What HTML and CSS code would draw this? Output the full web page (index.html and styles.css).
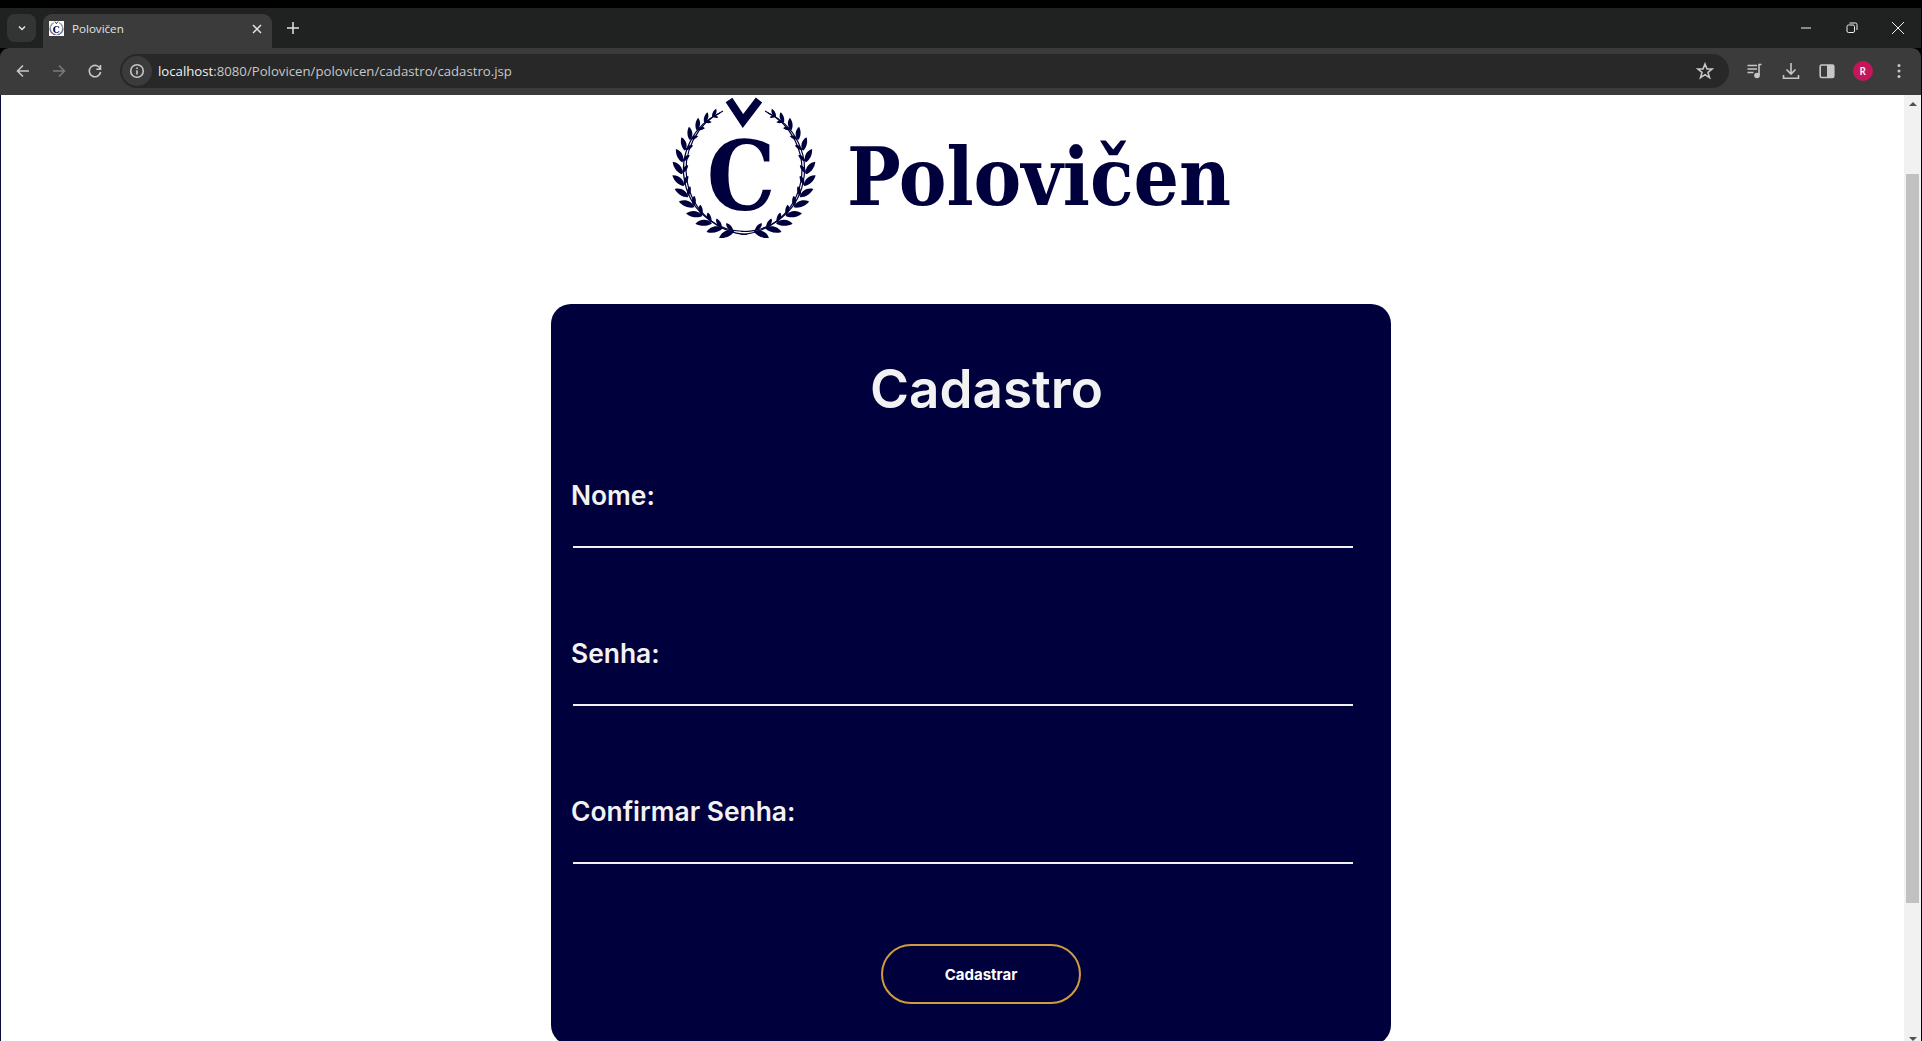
FILE: index.html
```html
<!DOCTYPE html>
<html lang="pt-BR">
<head>
  <meta charset="UTF-8" />
  <title>Polovičen</title>
  <link rel="stylesheet" href="styles.css">
</head>
<body>
  <svg class="defs" width="0" height="0" aria-hidden="true">
    <defs>
      <g id="leaves">
        <path d="M0 0C-2 5-8 9-14 9C-13 3-7-2 0 0Z"/>
        <path d="M-1 0C-2-3-4-6-9-7C-10-4-6 0-1 0Z"/>
      </g>
      <g id="branch">
        <path class="stem" d="M3 61.500A62 62 0 0 1-24-57"/>
        <path class="stem" d="M3 64.500A65 65 0 0 1-21-59"/>
        <use href="#leaves" transform="rotate(9) translate(0 62)"/>
        <use href="#leaves" transform="rotate(20) translate(0 62)"/>
        <use href="#leaves" transform="rotate(31) translate(0 62)"/>
        <use href="#leaves" transform="rotate(42) translate(0 62)"/>
        <use href="#leaves" transform="rotate(53) translate(0 62)"/>
        <use href="#leaves" transform="rotate(64) translate(0 62) scale(.95)"/>
        <use href="#leaves" transform="rotate(75) translate(0 62) scale(.95)"/>
        <use href="#leaves" transform="rotate(86) translate(0 62) scale(.95)"/>
        <use href="#leaves" transform="rotate(97) translate(0 62) scale(.9)"/>
        <use href="#leaves" transform="rotate(108) translate(0 62) scale(.85)"/>
        <use href="#leaves" transform="rotate(119) translate(0 62) scale(.8)"/>
        <use href="#leaves" transform="rotate(130) translate(0 62) scale(.75)"/>
        <use href="#leaves" transform="rotate(140) translate(0 62) scale(.65)"/>
        <use href="#leaves" transform="rotate(149) translate(0 62) scale(.55)"/>
      </g>
      <symbol id="mark" viewBox="-72 -72 144 150">
        <g transform="translate(0 3)">
          <use href="#branch"/>
          <use href="#branch" transform="scale(-1 1)"/>
        </g>
        <path class="caron" d="M-15-67L-1-46L15-67"/>
        <text class="mark-c" x="-3" y="43" text-anchor="middle">C</text>
      </symbol>
    </defs>
  </svg>

  <div class="browser">
    <header class="chrome">
      <div class="tabstrip">
        <button class="tab-search" aria-label="Pesquisar guias">
          <svg width="12" height="12" viewBox="0 0 12 12"><path class="ico-line" d="M3 4.500L6 7.500L9 4.500"/></svg>
        </button>
        <div class="tab">
          <span class="favicon"><svg width="15" height="15"><use href="#mark"/></svg></span>
          <span class="tab-title">Polovičen</span>
          <svg class="tab-close" width="12" height="12" viewBox="0 0 12 12"><path class="ico-line" d="M2 2L10 10M10 2L2 10"/></svg>
        </div>
        <svg class="new-tab" width="14" height="14" viewBox="0 0 14 14"><path class="ico-line" d="M7 1V13M1 7H13"/></svg>
        <div class="window-controls">
          <svg width="12" height="12" viewBox="0 0 12 12"><path class="win-line" d="M1 6H11"/></svg>
          <svg width="12" height="12" viewBox="0 0 12 12"><rect class="win-line" x="1" y="3" width="7.500" height="7.500" rx="1.500"/><path class="win-line" d="M3.500 1H9.500A1.500 1.500 0 0 1 11 2.500V8"/></svg>
          <svg width="14" height="14" viewBox="0 0 14 14"><path class="win-line" d="M1 1L13 13M13 1L1 13"/></svg>
        </div>
      </div>
      <div class="toolbar">
        <div class="nav-buttons">
          <svg width="16" height="16" viewBox="0 0 16 16"><path class="tool-line" d="M14 8H2.500M8 2.500L2.500 8L8 13.500"/></svg>
          <svg class="off" width="16" height="16" viewBox="0 0 16 16"><path class="tool-line" d="M2 8H13.500M8 2.500L13.500 8L8 13.500"/></svg>
          <svg width="16" height="16" viewBox="0 0 16 16"><path class="tool-line" d="M13.300 6A5.700 5.700 0 1 0 13.600 9M13.500 2V6.200H9.300"/></svg>
        </div>
        <div class="omnibox">
          <span class="site-info">
            <svg width="16" height="16" viewBox="0 0 16 16"><circle class="tool-line" cx="8" cy="8" r="6.300"/><path class="tool-line" d="M8 7.300V11.500M8 4.500V6"/></svg>
          </span>
          <span class="url"><span class="host">localhost</span>:8080/Polovicen/polovicen/cadastro/cadastro.jsp</span>
          <svg class="star" width="18" height="18" viewBox="0 0 18 18"><path class="tool-line" d="M9 2L11 7H16.200L12 10.400L13.500 15.700L9 12.700L4.500 15.700L6 10.400L1.800 7H7Z"/></svg>
        </div>
        <div class="tool-buttons">
          <svg width="18" height="18" viewBox="0 0 18 18"><path class="tool-line" d="M1.500 3.500H11M1.500 7H11M1.500 10.500H7.500M15.500 2.500H13V13"/><circle class="tool-fill" cx="11" cy="13.500" r="2.800"/></svg>
          <svg width="18" height="18" viewBox="0 0 18 18"><path class="tool-line" d="M9 1V11.500M4.500 7.500L9 12L13.500 7.500M1.500 13V16.200H16.500V13"/></svg>
          <svg width="16" height="16" viewBox="0 0 16 16"><rect class="tool-line" x="1.200" y="2" width="13.600" height="12.500" rx="1.500"/><rect class="tool-fill" x="8" y="2" width="7" height="12.500"/></svg>
          <span class="avatar">R</span>
          <svg width="16" height="16" viewBox="0 0 16 16"><circle class="tool-fill" cx="8" cy="2.500" r="1.500"/><circle class="tool-fill" cx="8" cy="8" r="1.500"/><circle class="tool-fill" cx="8" cy="13.500" r="1.500"/></svg>
        </div>
      </div>
    </header>

    <div class="viewport">
      <main class="page">
        <div class="brand">
          <svg class="brand-mark" width="144" height="150"><use href="#mark"/></svg>
          <span class="brand-name">Polovičen</span>
        </div>

        <section class="card">
          <h1>Cadastro</h1>
          <form class="signup">
            <label class="field">Nome:<input type="text" name="nome"></label>
            <label class="field">Senha:<input type="password" name="senha"></label>
            <label class="field">Confirmar Senha:<input type="password" name="confirmar"></label>
            <button type="button" class="submit">Cadastrar</button>
          </form>
        </section>
      </main>

      <div class="scrollbar">
        <span class="arrow up"></span>
        <span class="track"><span class="thumb"></span></span>
        <span class="arrow down"></span>
      </div>
    </div>
  </div>
</body>
</html>
```

FILE: styles.css
```css
html, body {
  margin: 0;
  padding: 0;
  height: 100%;
  overflow: hidden;
  background: #000;
}

*, *::before, *::after {
  box-sizing: border-box;
}

.defs {
  position: absolute;
}

.browser {
  width: 1921px;
  height: 1040px;
  margin-top: 8px;
  display: flex;
  flex-direction: column;
  font-family: "Open Sans", sans-serif;
}

/* browser chrome */
.chrome {
  flex: none;
  color: #e3e3e3;
}

.tabstrip {
  height: 40px;
  background: #202221;
  display: flex;
  align-items: flex-start;
  padding: 6px 0 0 7px;
}

.tab-search {
  width: 29px;
  height: 28px;
  padding: 0;
  border: 0;
  border-radius: 8px;
  background: #333534;
  display: flex;
  align-items: center;
  justify-content: center;
}

.tab {
  width: 229px;
  height: 34px;
  margin-left: 7px;
  padding: 0 9px 5px 6px;
  background: #3b3b3b;
  border-radius: 9px 9px 0 0;
  display: flex;
  align-items: center;
}

.favicon {
  width: 15px;
  height: 15px;
  background: #fff;
  display: block;
  flex: none;
}

.favicon svg {
  display: block;
}

.tab-title {
  margin-left: 8px;
  font-size: 11.6px;
  flex: 1;
}

.new-tab {
  margin: 7px 0 0 14px;
}

.window-controls {
  margin-left: auto;
  padding: 7px 16px 0 0;
  width: 121px;
  display: flex;
  justify-content: space-between;
  align-items: center;
}

.ico-line, .tool-line, .win-line {
  fill: none;
  stroke-width: 1.5;
}

.ico-line {
  stroke: #e3e3e3;
}

.win-line {
  stroke: #f0f0f0;
  stroke-width: 1;
}

.tool-line {
  stroke: #c7c7c7;
  stroke-width: 1.6;
}

.tool-fill {
  fill: #c7c7c7;
}

.toolbar {
  height: 47px;
  background: #3b3b3b;
  border-radius: 9px 9px 0 0;
  display: flex;
  align-items: center;
  padding: 0 0 2px 15px;
}

.nav-buttons {
  width: 105px;
  display: flex;
  gap: 20px;
}

.nav-buttons .off {
  opacity: .45;
}

.omnibox {
  width: 1609px;
  height: 34px;
  background: #282828;
  border-radius: 17px;
  display: flex;
  align-items: center;
  font-size: 13.2px;
  color: #c7c7c7;
  padding-right: 15px;
}

.site-info {
  width: 30px;
  height: 30px;
  margin-left: 2px;
  border-radius: 50%;
  background: #3b3b3b;
  display: flex;
  align-items: center;
  justify-content: center;
}

.url {
  margin-left: 6px;
  flex: 1;
}

.host {
  color: #f0f0f0;
}

.tool-buttons {
  flex: 1;
  display: flex;
  align-items: center;
  justify-content: space-between;
  padding: 0 14px 0 17px;
}

.avatar {
  width: 20px;
  height: 20px;
  border-radius: 50%;
  background: #c2185b;
  color: #fff;
  font-size: 10px;
  font-weight: 600;
  display: flex;
  align-items: center;
  justify-content: center;
}

/* page */
.viewport {
  flex: 1;
  min-height: 0;
  display: flex;
  border-bottom: 1px solid #3b3b3b;
}

.page {
  flex: 1;
  min-width: 0;
  background: #fff;
  border-left: 1px solid #0b0b3a;
  overflow: hidden;
}

.brand {
  height: 209px;
  padding-left: 671px;
  display: flex;
  align-items: flex-start;
}

.brand-mark {
  flex: none;
}

.brand-mark, .favicon svg {
  fill: #00003c;
}

.stem {
  fill: none;
  stroke: #00003c;
  stroke-width: 1.2;
}

.caron {
  fill: none;
  stroke: #00003c;
  stroke-width: 8;
}

.mark-c {
  font-family: "DejaVu Serif", serif;
  font-stretch: condensed;
  font-weight: 700;
  font-size: 96px;
}

.brand-name {
  margin: 10px 0 0 31px;
  font-family: "DejaVu Serif", serif;
  font-stretch: condensed;
  font-weight: 700;
  font-size: 79.500px;
  line-height: 144px;
  color: #00003c;
}

.card {
  width: 840px;
  height: 741px;
  margin-left: 550px;
  padding: 0 20px;
  background: #00003c;
  border-radius: 20px;
  color: #f2f2f2;
  font-family: Inter, "Open Sans", sans-serif;
}

.card h1 {
  margin: 0;
  padding: 53px 0 0 31px;
  font-size: 53px;
  line-height: 64px;
  font-weight: 600;
  text-align: center;
}

.signup {
  display: flex;
  flex-direction: column;
  padding-top: 58px;
}

.field {
  height: 158px;
  font-size: 26.400px;
  line-height: 32px;
  font-weight: 600;
  display: block;
}

.field input {
  display: block;
  width: 780px;
  height: 37px;
  margin: 0 0 0 2px;
  padding: 0;
  background: transparent;
  border: 0;
  border-bottom: 2px solid #f2f2f2;
  outline: 0;
}

.submit {
  width: 200px;
  height: 60px;
  margin: -9px 0 0 310px;
  background: transparent;
  border: 2px solid #d09c3c;
  border-radius: 30px;
  color: #fff;
  font-family: inherit;
  font-size: 15px;
  font-weight: 700;
}

/* scrollbar */
.scrollbar {
  flex: none;
  width: 17px;
  background: #f1f1f1;
  display: flex;
  flex-direction: column;
  align-items: center;
}

.arrow {
  flex: none;
  height: 17px;
  display: flex;
  align-items: center;
}

.arrow::before {
  content: "";
  border-left: 4px solid transparent;
  border-right: 4px solid transparent;
}

.arrow.up::before {
  border-bottom: 4px solid #505050;
}

.arrow.down::before {
  border-top: 4px solid #505050;
}

.track {
  flex: 1;
  width: 100%;
  padding: 62px 2px 0;
}

.thumb {
  display: block;
  height: 729px;
  background: #c1c1c1;
}
```
